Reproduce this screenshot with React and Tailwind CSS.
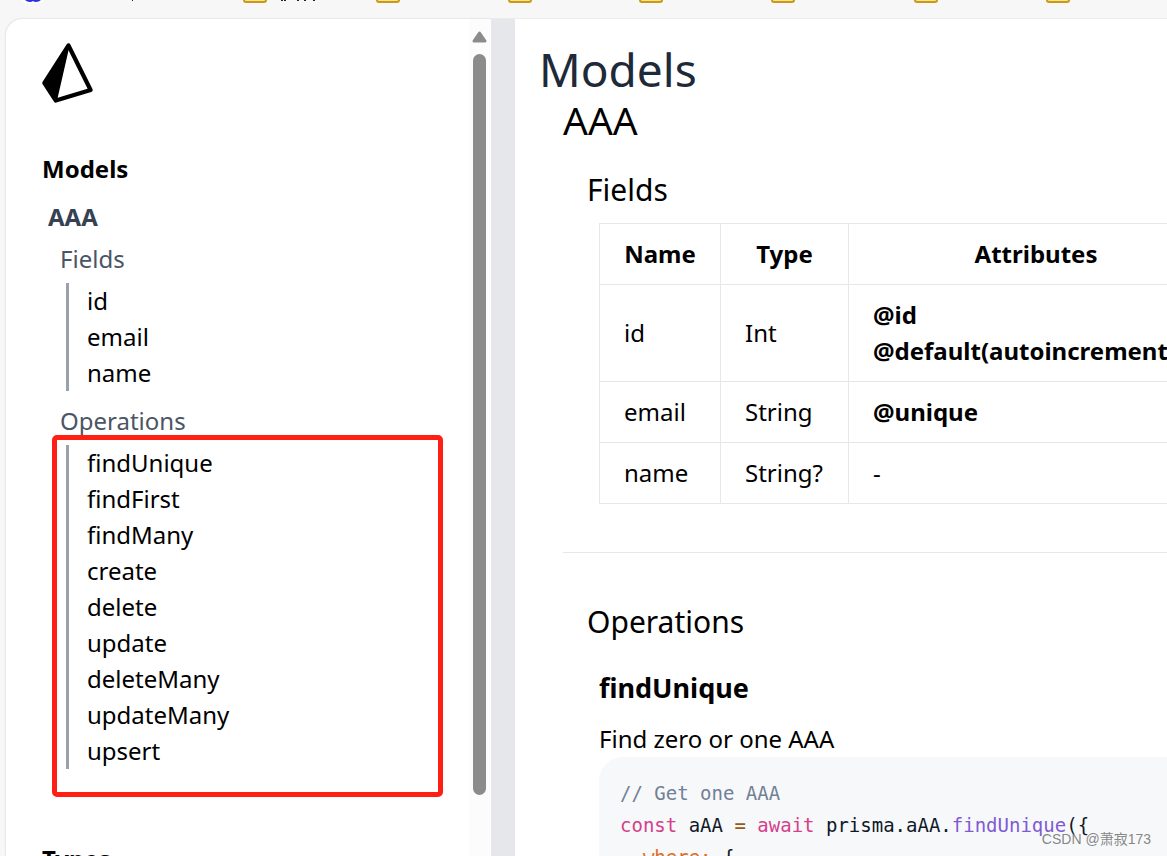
const fieldLinks = ['id', 'email', 'name'];
const operationLinks = ['findUnique', 'findFirst', 'findMany', 'create', 'delete', 'update', 'deleteMany', 'updateMany', 'upsert'];
const rows = [
  { name: 'id', type: 'Int', attributes: ['@id', '@default(autoincrement())'] },
  { name: 'email', type: 'String', attributes: ['@unique'] },
  { name: 'name', type: 'String?', attributes: [] },
];

function PrismaLogo() {
  return (
    <svg viewBox="0 0 52 62" className="h-[62px] w-[52px]" role="img" aria-label="Prisma">
      <path d="M26.5 2.5 2.4 40 13.8 57.6 48.6 47Z" fill="white" stroke="black" strokeWidth="4.2" strokeLinejoin="round" />
      <path d="M26.5 3 2.4 40 14 57.6Z" fill="black" stroke="black" strokeWidth="2" strokeLinejoin="round" />
    </svg>
  );
}

function Folder() {
  return (
    <svg viewBox="0 0 24 20" className="h-5 w-6 shrink-0" aria-hidden="true">
      <path d="M1 3a2 2 0 0 1 2-2h6l3 3h9a2 2 0 0 1 2 2v11a2 2 0 0 1-2 2H3a2 2 0 0 1-2-2Z" fill="#ffe08a" stroke="#c79a1b" strokeWidth="2" />
    </svg>
  );
}

function BookmarkBar() {
  return (
    <div className="flex h-[18px] shrink-0 items-start overflow-hidden">
      <div className="-mt-[17px] flex items-start">
        <div className="ml-[22px] flex w-[221px] items-start">
          <svg viewBox="0 0 22 20" className="h-5 w-[22px]" aria-hidden="true">
            <rect width="22" height="20" rx="3" fill="white" />
            <path d="M3 4h16v13q-2 2-5 2-2 0-3-1-1 1-3 1-3 0-5-2Z" fill="#2932e1" />
          </svg>
          <svg viewBox="0 0 4 20" className="ml-[86px] h-5 w-1" aria-hidden="true">
            <path d="M2 8h1v10H2Z" fill="#222" />
          </svg>
        </div>
        <div className="flex w-[133px]">
          <Folder />
          <svg viewBox="0 0 36 20" className="ml-[13px] h-5 w-9" aria-hidden="true">
            <path d="M2 8v10M5 8v10M18 8v10M25 8v10M34 8v10" stroke="#222" strokeWidth="2" />
          </svg>
        </div>
        <div className="flex w-[132px]"><Folder /></div>
        <div className="flex w-[131px]"><Folder /></div>
        <div className="flex w-[132px]"><Folder /></div>
        <div className="flex w-[143px]"><Folder /></div>
        <div className="flex w-[132px]"><Folder /></div>
        <Folder />
      </div>
    </div>
  );
}

function LinkList({ items }) {
  return (
    <ul className="ml-6 border-l-[3px] border-gray-400 pl-[18px]">
      {items.map((item) => (
        <li key={item}><a href={'#' + item}>{item}</a></li>
      ))}
    </ul>
  );
}

function Sidebar() {
  return (
    <aside className="mt-px flex w-[485px] shrink-0 overflow-hidden rounded-tl-2xl bg-white shadow-[0_0_2px_#c0c0c0]">
      <nav className="min-w-0 grow pl-9 pt-6">
        <PrismaLogo />
        <h2 className="mt-[46px] font-bold">Models</h2>
        <h3 className="mt-3 pl-[6px] font-bold text-gray-700">AAA</h3>
        <h4 className="mt-[6px] pl-[18px] text-gray-600">Fields</h4>
        <div className="mt-[6px]"><LinkList items={fieldLinks} /></div>
        <h4 className="mt-3 pl-[18px] text-gray-600">Operations</h4>
        <div className="relative mt-[6px]">
          <LinkList items={operationLinks} />
          <div className="pointer-events-none absolute -bottom-7 -top-[10px] left-[10px] right-[26px] rounded-[5px] border-[5px] border-[#ff1f14]" />
        </div>
        <h2 className="mt-[72px] font-bold">Types</h2>
      </nav>
      <div className="flex w-[22px] shrink-0 flex-col items-center bg-[#fcfcfc] pr-px pt-3" aria-hidden="true">
        <svg viewBox="0 0 15 12" className="h-3 w-[15px]">
          <path d="M7.5 2 13 10H2Z" fill="#8b8b8b" stroke="#8b8b8b" strokeWidth="3" strokeLinejoin="round" />
        </svg>
        <div className="mb-[61px] mt-[11px] w-[13px] grow rounded-full bg-[#8b8b8b]" />
      </div>
    </aside>
  );
}

function FieldsTable() {
  return (
    <table className="w-[700px] table-fixed border-collapse">
      <colgroup>
        <col className="w-[121px]" />
        <col className="w-32" />
        <col className="w-[375px]" />
        <col />
      </colgroup>
      <thead>
        <tr>
          {['Name', 'Type', 'Attributes'].map((h) => (
            <th key={h} className="border border-gray-200 px-6 py-3 font-bold">{h}</th>
          ))}
          <td className="border border-gray-200" />
        </tr>
      </thead>
      <tbody>
        {rows.map((row) => (
          <tr key={row.name}>
            <td className="border border-gray-200 px-6 py-3">{row.name}</td>
            <td className="border border-gray-200 px-6 py-3">{row.type}</td>
            <td className="border border-gray-200 px-6 py-3">
              {row.attributes.length === 0 && '-'}
              {row.attributes.map((a) => <div key={a} className="font-bold">{a}</div>)}
            </td>
            <td className="border border-gray-200" />
          </tr>
        ))}
      </tbody>
    </table>
  );
}

function CodeSample() {
  return (
    <pre className="w-[700px] rounded-[24px] bg-[#f7f8fa] px-[21px] py-5 font-['DejaVu_Sans_Mono',monospace] text-[19px] leading-8 text-gray-900">
      <span className="text-[#718096]">{'// Get one AAA'}</span>{'\n'}
      <span className="text-[#d53f8c]">const</span> aAA <span className="text-[#975a16]">=</span> <span className="text-[#d53f8c]">await</span> prisma.aAA.<span className="text-[#805ad5]">findUnique</span>{'({\n  '}
      <span className="text-[#dd6b20]">where:</span>{' {'}
    </pre>
  );
}

export default function App() {
  return (
    <div className="relative flex h-screen flex-col overflow-hidden bg-[#f7f7f7] font-['Noto_Sans','Noto_Sans_CJK_SC',sans-serif] text-[24px] leading-9 text-black">
      <BookmarkBar />
      <div className="flex min-h-0 grow pl-[6px]">
        <Sidebar />
        <div className="w-6 shrink-0 border-t border-[#ececec] bg-gray-200" />
        <main className="min-w-0 grow overflow-hidden border-t border-[#ececec] bg-white pl-6 pt-[22px]">
          <h1 className="text-[46px] leading-[56px] text-gray-800">Models</h1>
          <section className="pl-6">
            <h2 className="text-[39px] leading-[46px]">AAA</h2>
            <div className="pl-6">
              <h3 className="mt-[23px] text-[30px] leading-[48px]">Fields</h3>
              <div className="mt-[9px] pl-3"><FieldsTable /></div>
            </div>
            <hr className="mt-12 border-gray-200" />
            <div className="pl-6">
              <h3 className="mt-[45px] text-[30px] leading-[48px]">Operations</h3>
              <div className="pl-3">
                <h4 className="mt-6 text-[27px] font-bold leading-9">findUnique</h4>
                <p className="mt-[15px]">Find zero or one AAA</p>
                <CodeSample />
              </div>
            </div>
          </section>
        </main>
      </div>
      <div className="absolute bottom-[5px] right-4 font-['Liberation_Sans','Noto_Sans_CJK_SC',sans-serif] text-[14px] leading-6 text-[#777]/90">CSDN @萧寂173</div>
    </div>
  );
}
